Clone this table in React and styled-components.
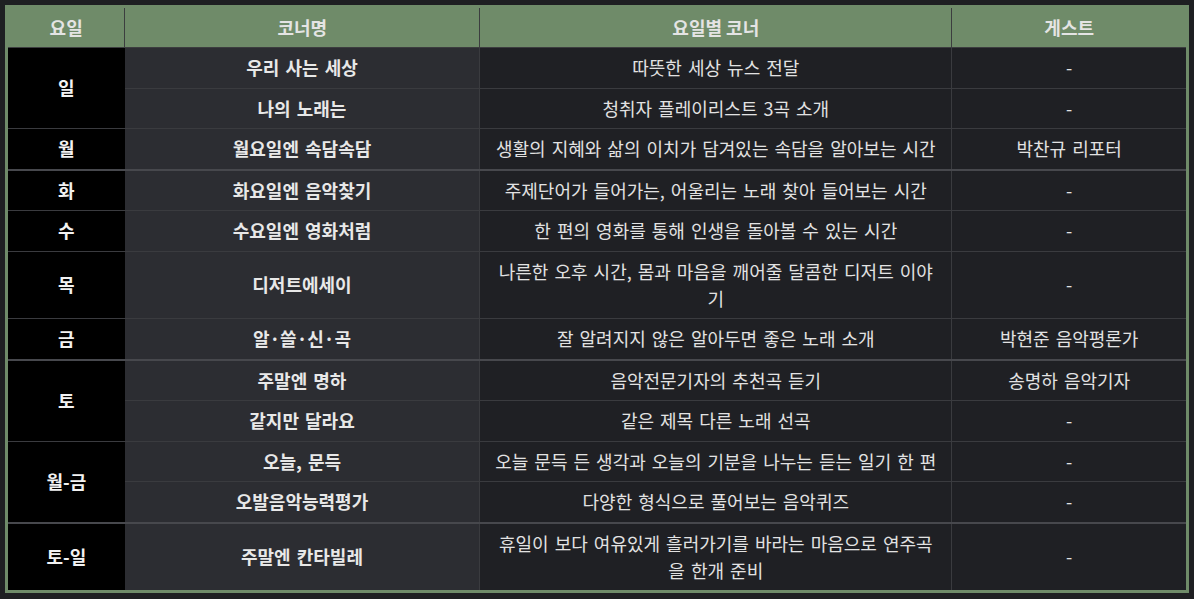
import React from "react";
import styled, { createGlobalStyle } from "styled-components";

const GlobalStyle = createGlobalStyle`
  html, body {
    margin: 0;
    background: #1e1f22;
  }
  body {
    padding: 5px;
    font-family: "Noto Sans CJK KR", "Noto Sans", sans-serif;
    color: #e2e2e2;
  }
`;

const schedule = [
  {
    day: "일",
    rows: [
      ["우리 사는 세상", "따뜻한 세상 뉴스 전달", "-"],
      ["나의 노래는", "청취자 플레이리스트 3곡 소개", "-"],
    ],
  },
  {
    day: "월",
    rows: [["월요일엔 속담속담", "생활의 지혜와 삶의 이치가 담겨있는 속담을 알아보는 시간", "박찬규 리포터"]],
  },
  {
    day: "화",
    thick: true,
    rows: [["화요일엔 음악찾기", "주제단어가 들어가는, 어울리는 노래 찾아 들어보는 시간", "-"]],
  },
  {
    day: "수",
    rows: [["수요일엔 영화처럼", "한 편의 영화를 통해 인생을 돌아볼 수 있는 시간", "-"]],
  },
  {
    day: "목",
    rows: [["디저트에세이", "나른한 오후 시간, 몸과 마음을 깨어줄 달콤한 디저트 이야기", "-"]],
  },
  {
    day: "금",
    rows: [["알·쓸·신·곡", "잘 알려지지 않은 알아두면 좋은 노래 소개", "박현준 음악평론가"]],
  },
  {
    day: "토",
    thick: true,
    rows: [
      ["주말엔 명하", "음악전문기자의 추천곡 듣기", "송명하 음악기자"],
      ["같지만 달라요", "같은 제목 다른 노래 선곡", "-"],
    ],
  },
  {
    day: "월-금",
    rows: [
      ["오늘, 문득", "오늘 문득 든 생각과 오늘의 기분을 나누는 듣는 일기 한 편", "-"],
      ["오발음악능력평가", "다양한 형식으로 풀어보는 음악퀴즈", "-"],
    ],
  },
  {
    day: "토-일",
    thick: true,
    rows: [["주말엔 칸타빌레", "휴일이 보다 여유있게 흘러가기를 바라는 마음으로 연주곡을 한개 준비", "-"]],
  },
];

function App() {
  return (
    <>
      <GlobalStyle />
      <Table>
        <colgroup>
          <col style={{ width: 118 }} />
          <col style={{ width: 354 }} />
          <col style={{ width: 471 }} />
          <col style={{ width: 235 }} />
        </colgroup>
        <thead>
          <tr>
            <Th>요일</Th>
            <Th>코너명</Th>
            <Th>요일별 코너</Th>
            <Th>게스트</Th>
          </tr>
        </thead>
        <tbody>
          {schedule.map((group) =>
            group.rows.map((row, i) => (
              <Row key={group.day + i} $thick={group.thick && i === 0}>
                {i === 0 && <DayCell rowSpan={group.rows.length}>{group.day}</DayCell>}
                <CornerCell>{row[0]}</CornerCell>
                <Cell>{row[1]}</Cell>
                <Cell>{row[2]}</Cell>
              </Row>
            ))
          )}
        </tbody>
      </Table>
    </>
  );
}

const Table = styled.table`
  width: 100%;
  table-layout: fixed;
  border-collapse: collapse;
  border: 3px solid #6f8b69;
  font-size: 18px;
  line-height: 27px;
  text-align: center;
`;

const Th = styled.th`
  background: #6f8b69;
  color: #e4e4e4;
  font-weight: 700;
  padding: 6px 12px;
  border-left: 1px solid #3c3d3f;
  border-bottom: 1px solid #3c3d3f;
  &:first-child {
    border-left: none;
  }
`;

const Row = styled.tr`
  & > td {
    border-top: ${(p) => (p.$thick ? "2px solid #47484d" : "1px solid #3a3b3f")};
  }
`;

const Cell = styled.td`
  background: #1f2024;
  color: #e2e2e2;
  padding: 6px 14px 6.5px;
  border-left: 1px solid #3a3b3f;
  word-spacing: 2px;
  word-break: break-all;
`;

const CornerCell = styled(Cell)`
  background: #2c2d32;
  font-weight: 700;
  color: #e8e8e8;
  border-left: none;
`;

const DayCell = styled(Cell)`
  background: #000;
  font-weight: 700;
  color: #f2f2f2;
`;

export default App;
